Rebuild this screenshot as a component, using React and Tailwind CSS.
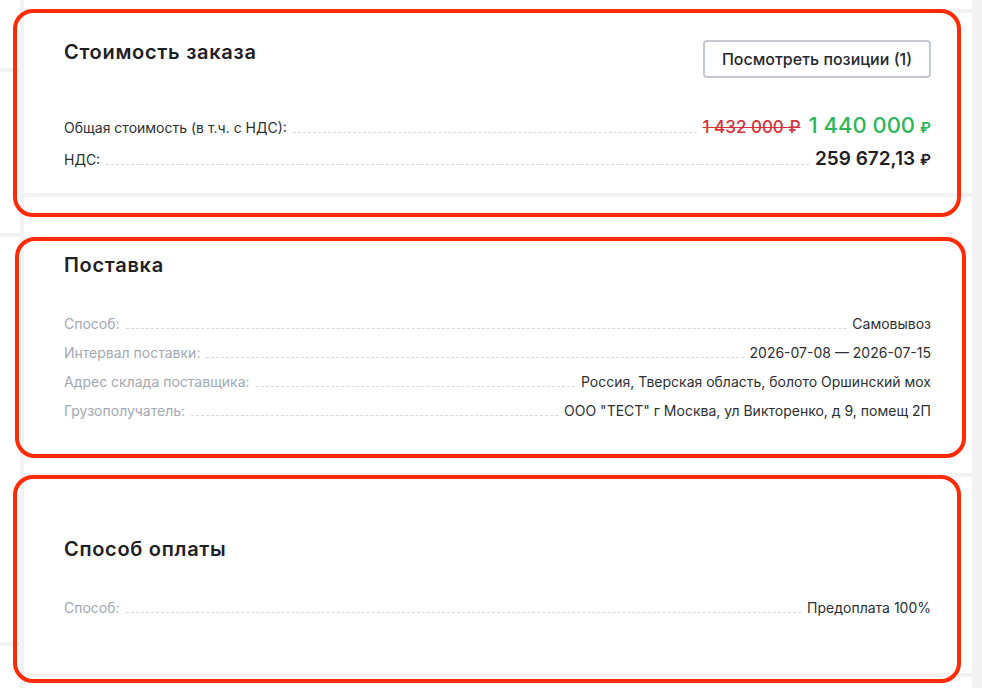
import React from 'react';

const deliveryRows = [
  { label: 'Способ:', value: 'Самовывоз' },
  { label: 'Интервал поставки:', value: '2026-07-08 — 2026-07-15' },
  { label: 'Адрес склада поставщика:', value: 'Россия, Тверская область, болото Оршинский мох' },
  { label: 'Грузополучатель:', value: 'ООО "ТЕСТ" г Москва, ул Викторенко, д 9, помещ 2П' },
];

function Leader() {
  return <div className="mx-[6px] h-0 flex-1 border-b border-dashed border-[#d5d8dd]" />;
}

function InfoRow({ label, children, muted = false, className = '' }) {
  return (
    <div className={`flex items-baseline ${className}`}>
      <span className={`text-[14px] ${muted ? 'text-[#a2a8b2]' : 'text-[#2c2f33]'}`}>{label}</span>
      <Leader />
      {children}
    </div>
  );
}

function Section({ title, className = '', children, action }) {
  return (
    <section className={`bg-white pl-[40px] pr-[41px] ${className}`}>
      <div className="flex items-start justify-between">
        <h2 className="text-[20px] font-semibold leading-[24px] tracking-[0.7px] text-[#1e2024]">{title}</h2>
        {action}
      </div>
      {children}
    </section>
  );
}

// red outline frames drawn over the sections
function Frame({ className }) {
  return <div className={`pointer-events-none absolute rounded-[20px] border-[4px] border-[#ff2a06] ${className}`} />;
}

export default function App() {
  return (
    <div
      className="relative flex h-[688px] w-[982px] overflow-hidden bg-[#f2f2f3]"
      style={{ fontFamily: 'Inter, "Noto Sans", sans-serif' }}
    >
      {/* left rail */}
      <div className="mr-[4px] flex w-[20px] flex-col gap-[4px]">
        <div className="h-[68px] bg-white" />
        <div className="h-[161px] bg-white" />
        <div className="h-[405px] bg-white" />
        <div className="flex-1 bg-white" />
      </div>

      {/* main column */}
      <div className="flex w-[948px] flex-col gap-[4px]">
        <div className="h-[9px] bg-white" />

        <Section
          title="Стоимость заказа"
          className="h-[180px] pt-[27px]"
          action={
            <button className="h-[38px] w-[228px] rounded-[4px] border-2 border-[#c4c8d0] bg-white text-[16px] font-medium text-[#25282d]">
              Посмотреть позиции (1)
            </button>
          }
        >
          <InfoRow label="Общая стоимость (в т.ч. с НДС):" className="mt-[31px] h-[30px]">
            <span className="text-[17px] font-medium text-[#d3323b] line-through">1 432 000 ₽</span>
            <span className="ml-[8px] text-[22px] font-medium text-[#2bb65a]">1 440 000</span>
            <span className="ml-[5px] text-[15px] font-semibold text-[#2bb65a]">₽</span>
          </InfoRow>
          <InfoRow label="НДС:" className="mt-[6px] h-[31px]">
            <span className="text-[19px] font-semibold text-[#1e2024]">259 672,13</span>
            <span className="ml-[5px] text-[15px] font-semibold text-[#1e2024]">₽</span>
          </InfoRow>
        </Section>

        <Section title="Поставка" className="h-[276px] pt-[56px]">
          <div className="mt-[36px] flex flex-col">
            {deliveryRows.map((row) => (
              <InfoRow key={row.label} label={row.label} muted className="h-[29px]">
                <span className="text-[14px] text-[#2c2f33]">{row.value}</span>
              </InfoRow>
            ))}
          </div>
        </Section>

        <Section title="Способ оплаты" className="h-[196px] pt-[60px]">
          <div className="mt-[36px]">
            <InfoRow label="Способ:" muted className="h-[29px]">
              <span className="text-[14px] text-[#2c2f33]">Предоплата 100%</span>
            </InfoRow>
          </div>
        </Section>

        <div className="flex-1 bg-white" />
      </div>

      <Frame className="left-[13px] top-[9px] h-[208px] w-[948px]" />
      <Frame className="left-[15px] top-[237px] h-[221px] w-[951px]" />
      <Frame className="left-[13px] top-[475px] h-[208px] w-[948px]" />
    </div>
  );
}
